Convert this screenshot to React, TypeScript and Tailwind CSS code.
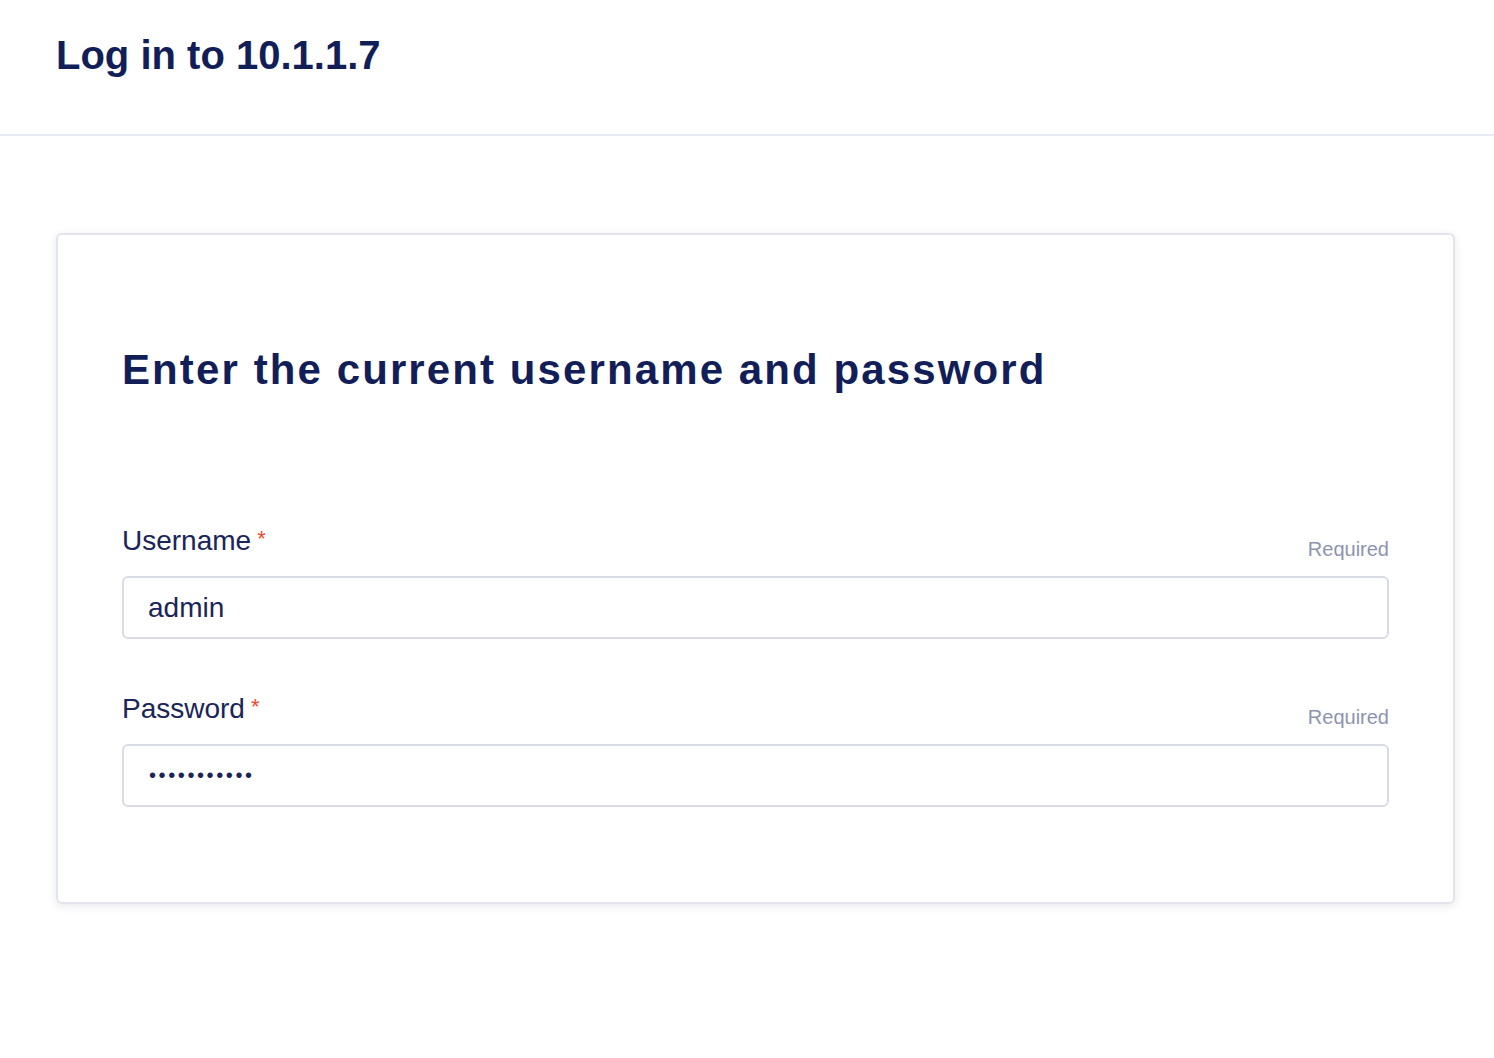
const Field = ({ label, value, type }: { label: string; value: string; type: string }) => (
  <div>
    <div className="flex items-start justify-between mb-[17px]">
      <label className="flex items-start text-[28px] leading-none text-[#1a2559]">
        {label}
        <span className="ml-[6px] mt-[1px] text-[22px] leading-none text-[#ef4a2e]">*</span>
      </label>
      <span className="mt-[12px] text-[20px] leading-none text-[#8e93ae]">Required</span>
    </div>
    <input
      type={type}
      defaultValue={value}
      readOnly
      className={
        type === 'password'
          ? 'block w-full h-[63px] rounded-[6px] border-2 border-[#d9dce3] bg-white px-[25px] text-[20px] tracking-[2.6px] text-[#1a2559] outline-none'
          : 'block w-full h-[63px] rounded-[6px] border-2 border-[#d9dce3] bg-white px-[24px] text-[28px] text-[#1a2559] outline-none'
      }
    />
  </div>
);

export default function App() {
  return (
    <div className="min-h-screen bg-white font-['Liberation_Sans',Arial,sans-serif]">
      {/* Header */}
      <header className="h-[136px] border-b-2 border-[#e8ebf3] px-[56px] pt-[35px]">
        <h1 className="text-[40px] leading-none font-bold text-[#121e57]">Log in to 10.1.1.7</h1>
      </header>

      {/* Login card */}
      <div className="mt-[97px] ml-[56px] w-[1399px] rounded-[6px] border-2 border-[#e3e4ec] bg-white px-[64px] pt-[114px] pb-[95px] shadow-[0_2px_10px_rgba(20,30,80,0.10)]">
        <h2 className="text-[42px] leading-none font-bold tracking-[2.1px] text-[#121e57]">
          Enter the current username and password
        </h2>

        <div className="mt-[136px] flex flex-col gap-[56px]">
          <Field label="Username" value="admin" type="text" />
          <Field label="Password" value="password123" type="password" />
        </div>
      </div>
    </div>
  );
}
